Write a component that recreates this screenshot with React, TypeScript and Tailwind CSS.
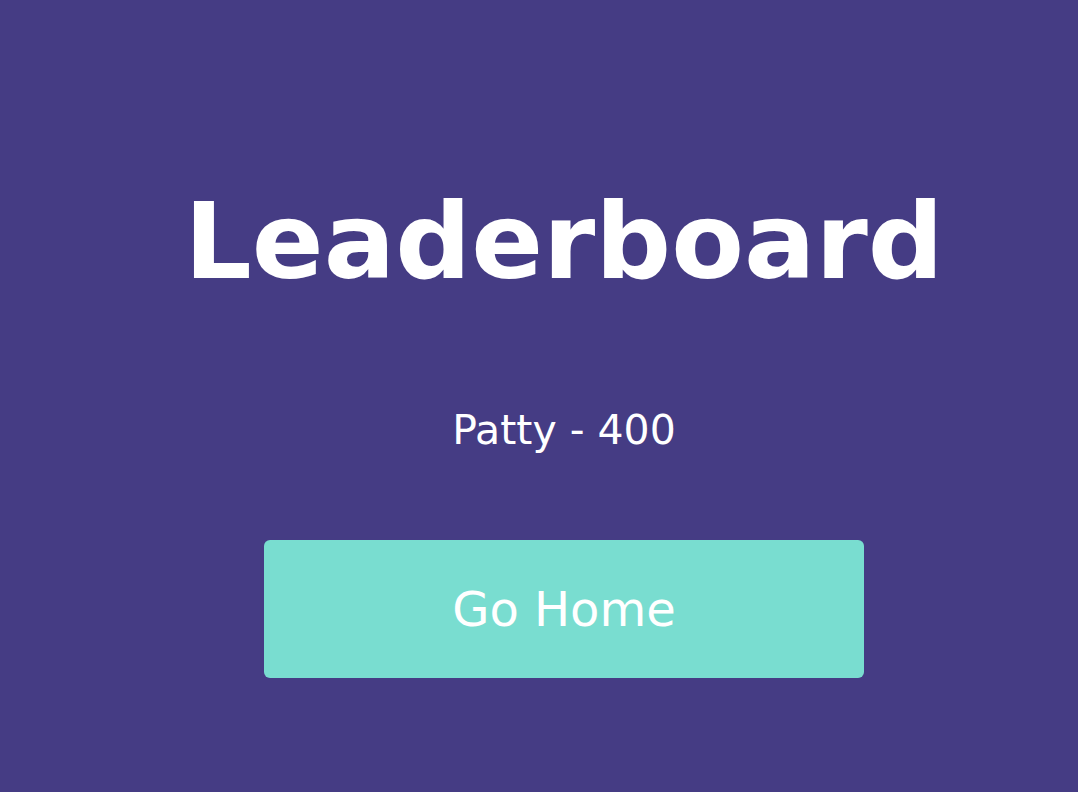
export default function App() {
  return (
    <div
      className="min-h-[792px] w-full bg-[#453c84] text-white flex flex-col items-center pl-[50px]"
      style={{ fontFamily: '"DejaVu Sans", Verdana, sans-serif' }}
    >
      <h1 className="mt-[189px] text-[106px] leading-none font-bold">Leaderboard</h1>
      <p className="mt-[115px] text-[41px] leading-none">Patty - 400</p>
      <button className="mt-[89px] w-[600px] h-[138px] rounded-md bg-[#79ddd0] text-[48px] text-white">
        Go Home
      </button>
    </div>
  );
}
